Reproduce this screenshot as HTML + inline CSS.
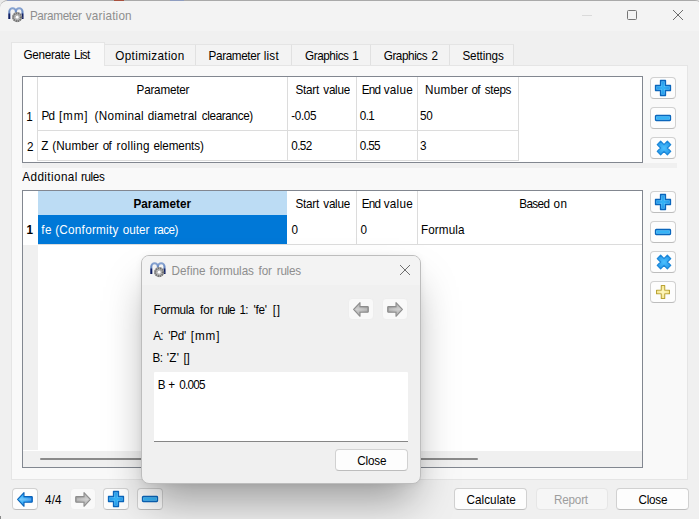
<!DOCTYPE html>
<html>
<head>
<meta charset="utf-8">
<title>Parameter variation</title>
<style>
*{box-sizing:border-box;margin:0;padding:0}
html,body{width:699px;height:519px;overflow:hidden;background:#e9e9e9;font-family:"Liberation Sans",sans-serif;font-size:11.7px;color:#000}
.abs{position:absolute}
div{position:absolute}
#win{left:0;top:0;width:703px;height:521px;background:#f0f0f0;border-top:1px solid #a9a9a9;border-radius:8px 8px 0 0;overflow:hidden}
#titlebar{left:0;top:0;width:703px;height:30px;background:#f3f3f3}
.t{position:absolute;white-space:nowrap;font-size:11.7px;line-height:14px;transform:scaleY(1.12);transform-origin:0 11.05px}
.tab{top:44px;height:21px;background:#f3f3f3;border-top:1px solid #e4e4e4;border-right:1px solid #e1e1e1}
#tabactive{left:11px;top:42px;width:94px;height:24px;background:#f9f9f9;border:1px solid #e5e5e5;border-bottom:none}
#pane{left:11px;top:65px;width:677px;height:415px;background:#f9f9f9;border:1px solid #e5e5e5}
.tbl{background:#fff;border:1px solid #828790}
.v{width:1px;background:#dcdcdc}
.h{height:1px;background:#dcdcdc}
.btn{background:#fdfdfd;border:1px solid #d1d1d1;border-bottom-color:#bdbdbd;border-radius:4px;height:22px}
.btn.dis{background:#f6f6f6;border-color:#e6e6e6}
.ib{width:26px;height:22px;background:#fdfdfd;border:1px solid #d1d1d1;border-bottom-color:#bdbdbd;border-radius:4px}
.ib.dis{background:#f9f9f9;border-color:#eeeeee}
#dlg{left:141px;top:255px;width:280px;height:229px;background:#f0f0f0;border:1px solid #bdbdbd;border-radius:8px;box-shadow:0 24px 40px -8px rgba(0,0,0,0.36),0 1px 7px rgba(0,0,0,0.06);overflow:hidden}
</style>
</head>
<body>
<div id="win"><div id="titlebar"></div></div>

<div style="left:0;top:516px;width:1px;height:3px;background:#8a8a8a"></div>
<div style="left:7px;top:0;width:13px;height:1px;background:#8f9dc0"></div><div style="left:114px;top:0;width:10px;height:1px;background:#a8503e"></div><div style="left:170px;top:0;width:14px;height:1px;background:#8f9dc0"></div>
<svg class="abs" style="left:8.05px;top:7.0px" width="18" height="17" viewBox="0 0 18 17"><defs><linearGradient id="g1" x1="0" y1="0" x2="0" y2="1"><stop offset="0" stop-color="#86a2d0"/><stop offset="0.42" stop-color="#6486c0"/><stop offset="0.56" stop-color="#13246a"/><stop offset="1" stop-color="#0b1a5e"/></linearGradient></defs><path d="M1.3 11.9 V4.55 A3.3 3.3 0 0 1 7.9 4.55 V9 M7.9 4.55 A3.3 3.3 0 0 1 14.5 4.55 V11.9" fill="none" stroke="url(#g1)" stroke-width="2.05"/><circle cx="9.15" cy="10.2" r="5.1" fill="#a2a2a2"/><circle cx="9.15" cy="10.2" r="3.9" fill="none" stroke="#6c6c6c" stroke-width="1.8" stroke-dasharray="1 1.1"/><circle cx="9.15" cy="10.2" r="2.7" fill="#c6c6c6"/><circle cx="9.15" cy="10.2" r="2.1" fill="none" stroke="#8c8c8c" stroke-width="0.8" stroke-dasharray="0.8 0.8"/><circle cx="9.15" cy="10.2" r="1.35" fill="#fff"/></svg>
<span class="t" style="left:29.90px;top:8.55px;letter-spacing:-0.334px;color:#8e8e8e;">Parameter</span><span class="t" style="left:85.80px;top:8.55px;letter-spacing:0.203px;color:#8e8e8e;">variation</span>
<div style="left:582px;top:15px;width:10px;height:1px;background:#dadada"></div>
<div style="left:627px;top:10px;width:10px;height:10px;border:1px solid #757575;border-radius:1.5px"></div>
<svg class="abs" style="left:672px;top:9px" width="12" height="12" viewBox="0 0 12 12"><path d="M1 1 L11 11 M11 1 L1 11" stroke="#6c6c6c" stroke-width="1" fill="none"/></svg>
<div id="pane"></div>
<div class="tab" style="left:105px;width:91px"></div>
<div class="tab" style="left:196px;width:96px"></div>
<div class="tab" style="left:292px;width:79px"></div>
<div class="tab" style="left:371px;width:79px"></div>
<div class="tab" style="left:450px;width:64px"></div>
<div id="tabactive"></div>
<span class="t" style="left:23.40px;top:47.55px;letter-spacing:-0.261px;">Generate</span><span class="t" style="left:74.10px;top:47.55px;letter-spacing:-0.68px;">List</span>
<span class="t" style="left:115.30px;top:48.95px;letter-spacing:0.359px;">Optimization</span>
<span class="t" style="left:208.60px;top:48.95px;letter-spacing:-0.359px;">Parameter</span><span class="t" style="left:263.70px;top:48.95px;letter-spacing:0.221px;">list</span>
<span class="t" style="left:305.00px;top:48.95px;letter-spacing:-0.403px;">Graphics</span><span class="t" style="left:352.30px;top:48.95px;letter-spacing:0px;">1</span>
<span class="t" style="left:383.70px;top:48.95px;letter-spacing:-0.403px;">Graphics</span><span class="t" style="left:431.50px;top:48.95px;letter-spacing:0px;">2</span>
<span class="t" style="left:462.40px;top:48.95px;letter-spacing:-0.127px;">Settings</span>
<div class="tbl" style="left:22px;top:76px;width:621px;height:87px"></div>
<div class="v" style="left:37px;top:77px;height:84px"></div>
<div class="v" style="left:287px;top:77px;height:84px"></div>
<div class="v" style="left:356px;top:77px;height:84px"></div>
<div class="v" style="left:417px;top:77px;height:84px"></div>
<div class="v" style="left:518px;top:77px;height:84px"></div>
<div class="h" style="left:38px;top:130px;width:481px"></div>
<div class="h" style="left:38px;top:160px;width:481px"></div>
<div style="left:22px;top:163px;width:655px;height:5px;background:#f0f0f0"></div>
<span class="t" style="left:136.60px;top:83.25px;letter-spacing:-0.221px;">Parameter</span>
<span class="t" style="left:295.40px;top:83.25px;letter-spacing:-0.209px;">Start</span><span class="t" style="left:323.30px;top:83.25px;letter-spacing:-0.26px;">value</span>
<span class="t" style="left:361.70px;top:83.25px;letter-spacing:-0.7px;">End</span><span class="t" style="left:383.70px;top:83.25px;letter-spacing:0.265px;">value</span>
<span class="t" style="left:425.00px;top:83.25px;letter-spacing:0.245px;">Number</span><span class="t" style="left:471.45px;top:83.25px;letter-spacing:-0.7px;">of</span><span class="t" style="left:484.70px;top:83.25px;letter-spacing:-0.298px;">steps</span>
<span class="t" style="left:26.30px;top:109.85px;letter-spacing:0px;">1</span>
<span class="t" style="left:41.50px;top:109.25px;letter-spacing:-0.7px;">Pd</span><span class="t" style="left:58.90px;top:109.25px;letter-spacing:0.877px;">[mm]</span><span class="t" style="left:94.60px;top:109.25px;letter-spacing:0.334px;">(Nominal</span><span class="t" style="left:147.70px;top:109.25px;letter-spacing:0.141px;">diametral</span><span class="t" style="left:201.80px;top:109.25px;letter-spacing:-0.353px;">clearance)</span>
<span class="t" style="left:291.20px;top:109.25px;letter-spacing:-0.335px;">-0.05</span>
<span class="t" style="left:359.80px;top:109.25px;letter-spacing:-0.6px;">0.1</span>
<span class="t" style="left:420.00px;top:109.25px;letter-spacing:-0.2px;">50</span>
<span class="t" style="left:41.15px;top:139.05px;letter-spacing:0px;">Z</span><span class="t" style="left:52.20px;top:139.05px;letter-spacing:0.139px;">(Number</span><span class="t" style="left:102.80px;top:139.05px;letter-spacing:-0.7px;">of</span><span class="t" style="left:116.50px;top:139.05px;letter-spacing:0.32px;">rolling</span><span class="t" style="left:153.50px;top:139.05px;letter-spacing:-0.128px;">elements)</span>
<span class="t" style="left:291.20px;top:139.05px;letter-spacing:-0.549px;">0.52</span>
<span class="t" style="left:359.80px;top:139.05px;letter-spacing:-0.649px;">0.55</span>
<span class="t" style="left:27.00px;top:139.85px;letter-spacing:0px;">2</span>
<span class="t" style="left:420.00px;top:139.05px;letter-spacing:-0.2px;">3</span>
<div class="ib" style="left:650px;top:77px"></div><svg class="abs" style="left:654px;top:79px" width="18" height="18" viewBox="0 0 18 18"><defs><radialGradient id="p1" cx="0.5" cy="0.5" r="0.6"><stop offset="0" stop-color="#36b6f8"/><stop offset="1" stop-color="#168ae2"/></radialGradient></defs><path d="M6.5 1.5 H11.5 V6.5 H16.5 V11.5 H11.5 V16.5 H6.5 V11.5 H1.5 V6.5 H6.5 Z" fill="url(#p1)" stroke="#0a66bc" stroke-width="1.3" stroke-linejoin="round"/><path d="M7.65 2.65 H10.35 V7.65 H15.35 V10.35 H10.35 V15.35 H7.65 V10.35 H2.65 V7.65 H7.65 Z" fill="none" stroke="#8ad8ff" stroke-opacity="0.55" stroke-width="0.7"/></svg>
<div class="ib" style="left:650px;top:107px"></div><svg class="abs" style="left:654px;top:114px" width="18" height="8" viewBox="0 0 18 8"><defs><linearGradient id="m1" x1="0" y1="0" x2="0" y2="1"><stop offset="0" stop-color="#1a90e6"/><stop offset="0.5" stop-color="#3ebcfa"/><stop offset="1" stop-color="#1a90e6"/></linearGradient></defs><rect x="1.5" y="1.5" width="15" height="5" rx="0.8" fill="url(#m1)" stroke="#0a66bc" stroke-width="1.3"/><rect x="2.65" y="2.65" width="12.7" height="2.7" fill="none" stroke="#8ad8ff" stroke-opacity="0.55" stroke-width="0.7"/></svg>
<div class="ib" style="left:650px;top:137px"></div><svg class="abs" style="left:654.8px;top:138.7px" width="18" height="18" viewBox="0 0 18 18"><defs><radialGradient id="x1" cx="0.5" cy="0.5" r="0.6"><stop offset="0" stop-color="#4cc0ff"/><stop offset="1" stop-color="#2294e6"/></radialGradient></defs><g transform="rotate(45 9 9)"><path d="M6.6 1.85 H11.4 V6.6 H16.15 V11.4 H11.4 V16.15 H6.6 V11.4 H1.85 V6.6 H6.6 Z" fill="url(#x1)" stroke="#1b86d8" stroke-width="1.2" stroke-linejoin="round"/></g></svg>
<span class="t" style="left:22.30px;top:169.55px;letter-spacing:0.407px;">Additional</span><span class="t" style="left:80.90px;top:169.55px;letter-spacing:-0.347px;">rules</span>
<div class="tbl" style="left:22px;top:190px;width:621px;height:278px"></div>
<div style="left:23px;top:245px;width:15px;height:205px;background:#f0f0f0"></div>
<div style="left:23px;top:451px;width:619px;height:16px;background:#f0f0f0"></div>
<div style="left:40px;top:458px;width:438px;height:2px;background:#8a8a8a;border-radius:1px"></div>
<div style="left:38px;top:191px;width:249px;height:24px;background:#bcdcf4"></div>
<div style="left:38px;top:215px;width:249px;height:29px;background:#0078d7"></div>
<div class="v" style="left:356px;top:191px;height:53px"></div>
<div class="v" style="left:417px;top:191px;height:53px"></div>
<div class="h" style="left:38px;top:244px;width:604px"></div>
<span class="t" style="left:133.40px;top:196.65px;letter-spacing:0.059px;font-weight:700;">Parameter</span>
<span class="t" style="left:295.40px;top:196.65px;letter-spacing:-0.209px;">Start</span><span class="t" style="left:323.30px;top:196.65px;letter-spacing:-0.26px;">value</span>
<span class="t" style="left:361.70px;top:196.65px;letter-spacing:-0.7px;">End</span><span class="t" style="left:383.70px;top:196.65px;letter-spacing:0.265px;">value</span>
<span class="t" style="left:519.30px;top:196.65px;letter-spacing:-0.635px;">Based</span><span class="t" style="left:553.60px;top:196.65px;letter-spacing:0.4px;">on</span>
<span class="t" style="left:26.60px;top:223.45px;letter-spacing:0px;font-weight:700;">1</span>
<span class="t" style="left:41.20px;top:222.75px;letter-spacing:0.453px;color:#fff;">fe</span><span class="t" style="left:55.20px;top:222.75px;letter-spacing:0.275px;color:#fff;">(Conformity</span><span class="t" style="left:122.80px;top:222.75px;letter-spacing:0.013px;color:#fff;">outer</span><span class="t" style="left:153.90px;top:222.75px;letter-spacing:-0.509px;color:#fff;">race)</span>
<span class="t" style="left:291.40px;top:222.75px;letter-spacing:0px;">0</span>
<span class="t" style="left:360.40px;top:222.75px;letter-spacing:0px;">0</span>
<span class="t" style="left:421.00px;top:222.75px;letter-spacing:0.106px;">Formula</span>
<div class="ib" style="left:650px;top:191px"></div><svg class="abs" style="left:654px;top:193px" width="18" height="18" viewBox="0 0 18 18"><defs><radialGradient id="p2" cx="0.5" cy="0.5" r="0.6"><stop offset="0" stop-color="#36b6f8"/><stop offset="1" stop-color="#168ae2"/></radialGradient></defs><path d="M6.5 1.5 H11.5 V6.5 H16.5 V11.5 H11.5 V16.5 H6.5 V11.5 H1.5 V6.5 H6.5 Z" fill="url(#p2)" stroke="#0a66bc" stroke-width="1.3" stroke-linejoin="round"/><path d="M7.65 2.65 H10.35 V7.65 H15.35 V10.35 H10.35 V15.35 H7.65 V10.35 H2.65 V7.65 H7.65 Z" fill="none" stroke="#8ad8ff" stroke-opacity="0.55" stroke-width="0.7"/></svg>
<div class="ib" style="left:650px;top:221px"></div><svg class="abs" style="left:654px;top:228px" width="18" height="8" viewBox="0 0 18 8"><defs><linearGradient id="m2" x1="0" y1="0" x2="0" y2="1"><stop offset="0" stop-color="#1a90e6"/><stop offset="0.5" stop-color="#3ebcfa"/><stop offset="1" stop-color="#1a90e6"/></linearGradient></defs><rect x="1.5" y="1.5" width="15" height="5" rx="0.8" fill="url(#m2)" stroke="#0a66bc" stroke-width="1.3"/><rect x="2.65" y="2.65" width="12.7" height="2.7" fill="none" stroke="#8ad8ff" stroke-opacity="0.55" stroke-width="0.7"/></svg>
<div class="ib" style="left:650px;top:251px"></div><svg class="abs" style="left:654.8px;top:252.7px" width="18" height="18" viewBox="0 0 18 18"><defs><radialGradient id="x2" cx="0.5" cy="0.5" r="0.6"><stop offset="0" stop-color="#4cc0ff"/><stop offset="1" stop-color="#2294e6"/></radialGradient></defs><g transform="rotate(45 9 9)"><path d="M6.6 1.85 H11.4 V6.6 H16.15 V11.4 H11.4 V16.15 H6.6 V11.4 H1.85 V6.6 H6.6 Z" fill="url(#x2)" stroke="#1b86d8" stroke-width="1.2" stroke-linejoin="round"/></g></svg>
<div class="ib" style="left:650px;top:281px"></div><svg class="abs" style="left:654px;top:283px" width="18" height="18" viewBox="0 0 18 18"><defs><radialGradient id="p3" cx="0.5" cy="0.5" r="0.6"><stop offset="0" stop-color="#fff9c4"/><stop offset="1" stop-color="#f0d950"/></radialGradient></defs><path d="M7.3 2.55 H10.7 V7.3 H15.45 V10.7 H10.7 V15.45 H7.3 V10.7 H2.55 V7.3 H7.3 Z" fill="url(#p3)" stroke="#b9a233" stroke-width="1.1" stroke-linejoin="round"/><path d="M8.2 3.45 H9.8 V8.2 H14.55 V9.8 H9.8 V14.55 H8.2 V9.8 H3.45 V8.2 H8.2 Z" fill="none" stroke="#fffbd8" stroke-opacity="0.55" stroke-width="0.7"/></svg>
<div class="ib" style="left:12px;top:488px"></div><svg class="abs" style="left:12px;top:488px" width="26" height="22" viewBox="0 0 26 22"><defs><linearGradient id="a1" x1="0" y1="0" x2="1" y2="0"><stop offset="0" stop-color="#52c4ff"/><stop offset="0.5" stop-color="#2ea4f4"/><stop offset="1" stop-color="#0c74dc"/></linearGradient><linearGradient id="a1h" x1="0" y1="0" x2="0" y2="1"><stop offset="0" stop-color="#fff" stop-opacity="0"/><stop offset="0.5" stop-color="#fff" stop-opacity="0.28"/><stop offset="1" stop-color="#fff" stop-opacity="0"/></linearGradient></defs><g><path d="M5.6 11.3 L12 4.6 V8.6 H19.6 Q20.3 8.6 20.3 9.3 V13.6 Q20.3 14.3 19.6 14.3 H12 V18.3 Z" fill="url(#a1)" stroke="#0b62b8" stroke-width="1.1" stroke-linejoin="round"/><path d="M7.4 11.3 L11 7.6 V9.7 H19.2 V13.2 H11 V15.2 Z" fill="url(#a1h)"/></g></svg>
<span class="t" style="left:45.00px;top:492.55px;letter-spacing:0.126px;">4/4</span>
<div class="ib dis" style="left:70px;top:488px"></div><svg class="abs" style="left:70px;top:488px" width="26" height="22" viewBox="0 0 26 22"><defs><linearGradient id="a2" x1="0" y1="0" x2="1" y2="0"><stop offset="0" stop-color="#c9c9c9"/><stop offset="0.5" stop-color="#b4b4b4"/><stop offset="1" stop-color="#9b9b9b"/></linearGradient><linearGradient id="a2h" x1="0" y1="0" x2="0" y2="1"><stop offset="0" stop-color="#fff" stop-opacity="0"/><stop offset="0.5" stop-color="#fff" stop-opacity="0.28"/><stop offset="1" stop-color="#fff" stop-opacity="0"/></linearGradient></defs><g transform="translate(26 0) scale(-1 1)"><path d="M5.6 11.3 L12 4.6 V8.6 H19.6 Q20.3 8.6 20.3 9.3 V13.6 Q20.3 14.3 19.6 14.3 H12 V18.3 Z" fill="url(#a2)" stroke="#8d8d8d" stroke-width="1.1" stroke-linejoin="round"/><path d="M7.4 11.3 L11 7.6 V9.7 H19.2 V13.2 H11 V15.2 Z" fill="url(#a2h)"/></g></svg>
<div class="ib" style="left:103px;top:488px"></div><svg class="abs" style="left:107px;top:490px" width="18" height="18" viewBox="0 0 18 18"><defs><radialGradient id="p4" cx="0.5" cy="0.5" r="0.6"><stop offset="0" stop-color="#36b6f8"/><stop offset="1" stop-color="#168ae2"/></radialGradient></defs><path d="M6.5 1.5 H11.5 V6.5 H16.5 V11.5 H11.5 V16.5 H6.5 V11.5 H1.5 V6.5 H6.5 Z" fill="url(#p4)" stroke="#0a66bc" stroke-width="1.3" stroke-linejoin="round"/><path d="M7.65 2.65 H10.35 V7.65 H15.35 V10.35 H10.35 V15.35 H7.65 V10.35 H2.65 V7.65 H7.65 Z" fill="none" stroke="#8ad8ff" stroke-opacity="0.55" stroke-width="0.7"/></svg>
<div class="ib" style="left:137px;top:488px"></div><svg class="abs" style="left:141px;top:495px" width="18" height="8" viewBox="0 0 18 8"><defs><linearGradient id="m4" x1="0" y1="0" x2="0" y2="1"><stop offset="0" stop-color="#1a90e6"/><stop offset="0.5" stop-color="#3ebcfa"/><stop offset="1" stop-color="#1a90e6"/></linearGradient></defs><rect x="1.5" y="1.5" width="15" height="5" rx="0.8" fill="url(#m4)" stroke="#0a66bc" stroke-width="1.3"/><rect x="2.65" y="2.65" width="12.7" height="2.7" fill="none" stroke="#8ad8ff" stroke-opacity="0.55" stroke-width="0.7"/></svg>
<div class="btn" style="left:454px;top:488px;width:73px"></div>
<div class="btn dis" style="left:536px;top:488px;width:72px"></div>
<div class="btn" style="left:616px;top:488px;width:73px"></div>
<span class="t" style="left:466.40px;top:492.65px;letter-spacing:0.084px;">Calculate</span>
<span class="t" style="left:554.10px;top:492.65px;letter-spacing:-0.22px;color:#9d9d9d;">Report</span>
<span class="t" style="left:638.40px;top:492.65px;letter-spacing:-0.195px;">Close</span>
<div id="dlg"><div style="left:0;top:0;width:280px;height:29px;background:#f3f3f3"></div></div>
<svg class="abs" style="left:150.0px;top:262.0px" width="18" height="17" viewBox="0 0 18 17"><defs><linearGradient id="g2" x1="0" y1="0" x2="0" y2="1"><stop offset="0" stop-color="#86a2d0"/><stop offset="0.42" stop-color="#6486c0"/><stop offset="0.56" stop-color="#13246a"/><stop offset="1" stop-color="#0b1a5e"/></linearGradient></defs><path d="M1.3 11.9 V4.55 A3.3 3.3 0 0 1 7.9 4.55 V9 M7.9 4.55 A3.3 3.3 0 0 1 14.5 4.55 V11.9" fill="none" stroke="url(#g2)" stroke-width="2.05"/><circle cx="9.15" cy="10.2" r="5.1" fill="#a2a2a2"/><circle cx="9.15" cy="10.2" r="3.9" fill="none" stroke="#6c6c6c" stroke-width="1.8" stroke-dasharray="1 1.1"/><circle cx="9.15" cy="10.2" r="2.7" fill="#c6c6c6"/><circle cx="9.15" cy="10.2" r="2.1" fill="none" stroke="#8c8c8c" stroke-width="0.8" stroke-dasharray="0.8 0.8"/><circle cx="9.15" cy="10.2" r="1.35" fill="#fff"/></svg>
<span class="t" style="left:171.60px;top:263.65px;letter-spacing:0.033px;color:#8e8e8e;">Define</span><span class="t" style="left:209.50px;top:263.65px;letter-spacing:-0.053px;color:#8e8e8e;">formulas</span><span class="t" style="left:258.50px;top:263.65px;letter-spacing:-0.074px;color:#8e8e8e;">for</span><span class="t" style="left:276.75px;top:263.65px;letter-spacing:-0.26px;color:#8e8e8e;">rules</span>
<svg class="abs" style="left:399px;top:264px" width="12" height="12" viewBox="0 0 12 12"><path d="M1 1 L11 11 M11 1 L1 11" stroke="#6f6f6f" stroke-width="1" fill="none"/></svg>
<span class="t" style="left:153.60px;top:302.65px;letter-spacing:-0.311px;">Formula</span><span class="t" style="left:200.10px;top:302.65px;letter-spacing:-0.074px;">for</span><span class="t" style="left:218.10px;top:302.65px;letter-spacing:-0.663px;">rule</span><span class="t" style="left:239.40px;top:302.65px;letter-spacing:-0.7px;">1:</span><span class="t" style="left:253.50px;top:302.65px;letter-spacing:-0.226px;">'fe'</span><span class="t" style="left:272.80px;top:302.65px;letter-spacing:0.753px;">[]</span>
<span class="t" style="left:153.15px;top:328.75px;letter-spacing:-0.7px;">A:</span><span class="t" style="left:168.20px;top:328.75px;letter-spacing:-0.242px;">'Pd'</span><span class="t" style="left:190.84px;top:328.75px;letter-spacing:0.9px;">[mm]</span>
<span class="t" style="left:152.60px;top:350.85px;letter-spacing:-0.7px;">B:</span><span class="t" style="left:166.70px;top:350.85px;letter-spacing:0.315px;">'Z'</span><span class="t" style="left:183.40px;top:350.85px;letter-spacing:-0.247px;">[]</span>
<div class="ib dis" style="left:348px;top:298px"></div><svg class="abs" style="left:348px;top:298px" width="26" height="22" viewBox="0 0 26 22"><defs><linearGradient id="a3" x1="0" y1="0" x2="1" y2="0"><stop offset="0" stop-color="#c9c9c9"/><stop offset="0.5" stop-color="#b4b4b4"/><stop offset="1" stop-color="#9b9b9b"/></linearGradient><linearGradient id="a3h" x1="0" y1="0" x2="0" y2="1"><stop offset="0" stop-color="#fff" stop-opacity="0"/><stop offset="0.5" stop-color="#fff" stop-opacity="0.28"/><stop offset="1" stop-color="#fff" stop-opacity="0"/></linearGradient></defs><g><path d="M5.6 11.3 L12 4.6 V8.6 H19.6 Q20.3 8.6 20.3 9.3 V13.6 Q20.3 14.3 19.6 14.3 H12 V18.3 Z" fill="url(#a3)" stroke="#8d8d8d" stroke-width="1.1" stroke-linejoin="round"/><path d="M7.4 11.3 L11 7.6 V9.7 H19.2 V13.2 H11 V15.2 Z" fill="url(#a3h)"/></g></svg>
<div class="ib dis" style="left:382px;top:298px"></div><svg class="abs" style="left:382px;top:298px" width="26" height="22" viewBox="0 0 26 22"><defs><linearGradient id="a4" x1="0" y1="0" x2="1" y2="0"><stop offset="0" stop-color="#c9c9c9"/><stop offset="0.5" stop-color="#b4b4b4"/><stop offset="1" stop-color="#9b9b9b"/></linearGradient><linearGradient id="a4h" x1="0" y1="0" x2="0" y2="1"><stop offset="0" stop-color="#fff" stop-opacity="0"/><stop offset="0.5" stop-color="#fff" stop-opacity="0.28"/><stop offset="1" stop-color="#fff" stop-opacity="0"/></linearGradient></defs><g transform="translate(26 0) scale(-1 1)"><path d="M5.6 11.3 L12 4.6 V8.6 H19.6 Q20.3 8.6 20.3 9.3 V13.6 Q20.3 14.3 19.6 14.3 H12 V18.3 Z" fill="url(#a4)" stroke="#8d8d8d" stroke-width="1.1" stroke-linejoin="round"/><path d="M7.4 11.3 L11 7.6 V9.7 H19.2 V13.2 H11 V15.2 Z" fill="url(#a4h)"/></g></svg>
<div style="left:154px;top:372px;width:254px;height:70px;background:#fff;border-bottom:1px solid #868686;border-radius:1px 1px 0 0"></div>
<span class="t" style="left:157.80px;top:378.15px;letter-spacing:0px;">B</span><span class="t" style="left:168.35px;top:378.15px;letter-spacing:0px;">+</span><span class="t" style="left:179.13px;top:378.15px;letter-spacing:-0.7px;">0.005</span>
<div class="btn" style="left:335px;top:449px;width:73px"></div>
<span class="t" style="left:357.30px;top:454.25px;letter-spacing:-0.17px;">Close</span>
</body>
</html>
